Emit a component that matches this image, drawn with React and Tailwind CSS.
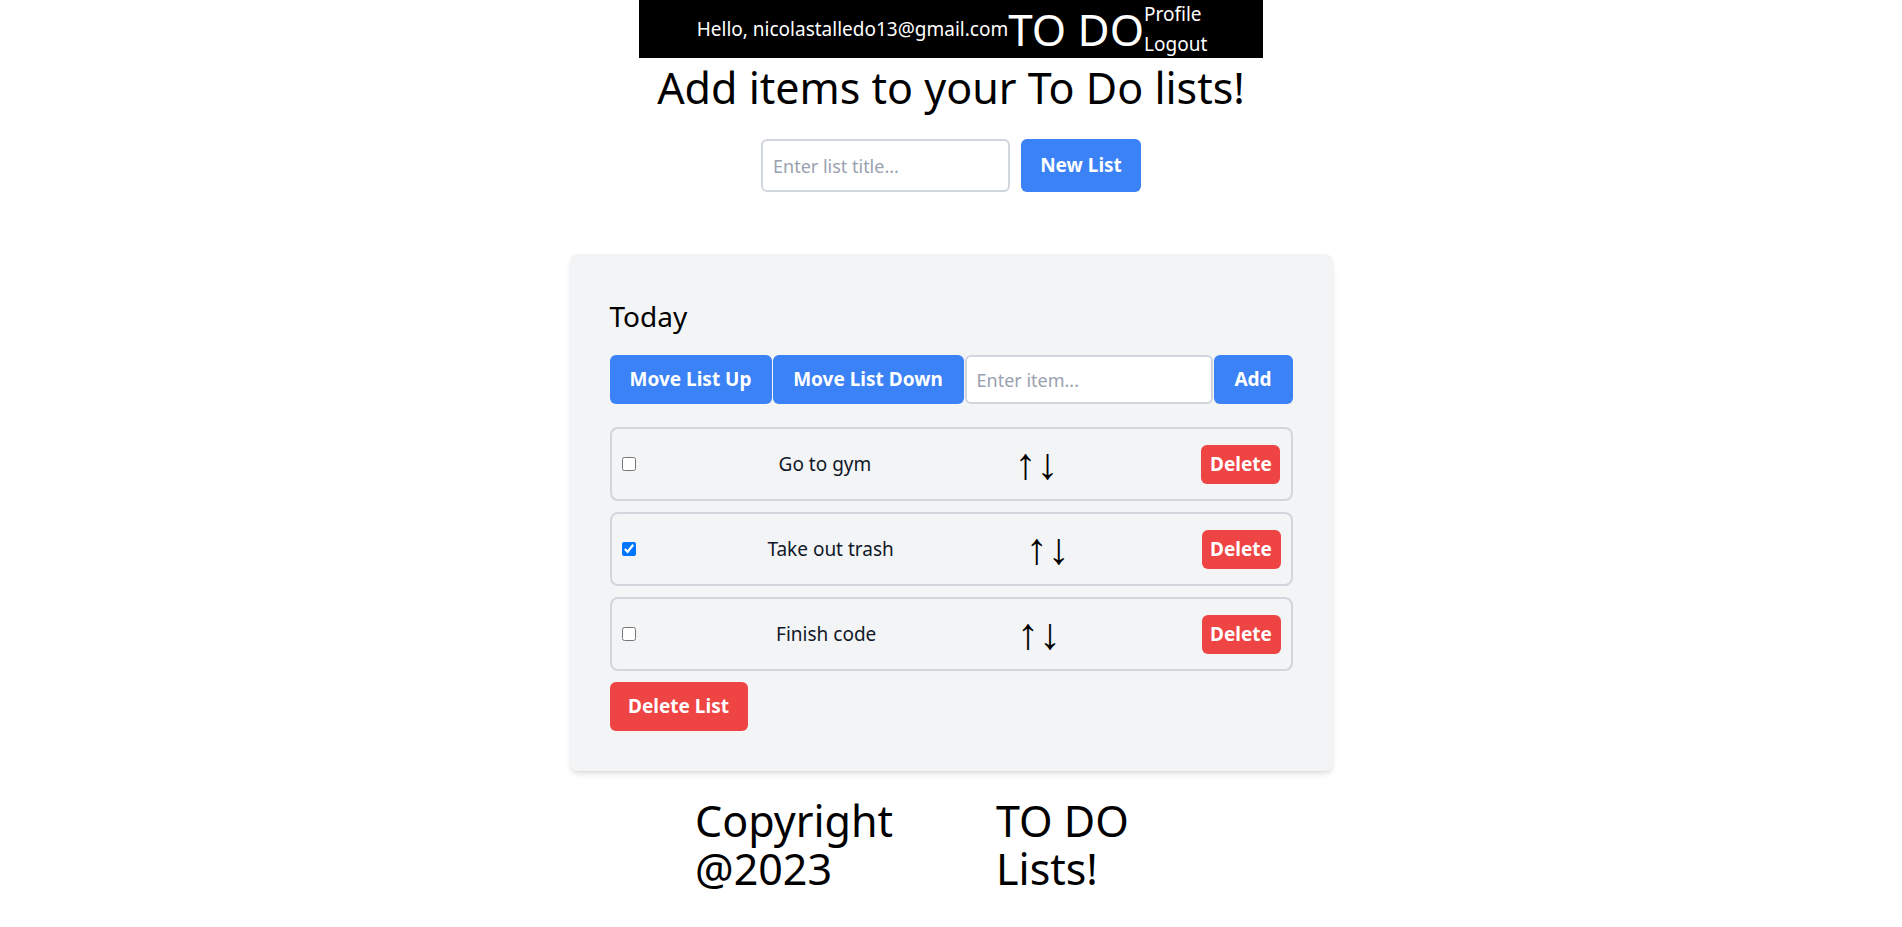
import { useState } from "react";

const font = { fontFamily: '"Segoe UI", "Noto Sans", sans-serif' };

function Item({ text, done }) {
  const [checked, setChecked] = useState(done);
  return (
    <div className="flex justify-between items-center h-[74px] px-2.5 border-2 border-gray-300 rounded-lg">
      <input
        type="checkbox"
        checked={checked}
        onChange={() => setChecked(!checked)}
        className="w-[14px] h-[14px]"
      />
      <span className="text-[19px] text-gray-900">{text}</span>
      <span className="text-[44px] leading-none" style={{ fontFamily: '"Liberation Sans", sans-serif' }}>
        ↑↓
      </span>
      <button className="h-[39px] w-[79px] bg-[#ef4444] text-white font-bold text-[19px] rounded-md">Delete</button>
    </div>
  );
}

export default function App() {
  return (
    <div className="min-h-screen bg-white text-black" style={font}>
      {/* Header */}
      <header className="mx-auto w-fit h-[58px] pl-[58px] pr-[56px] bg-black text-white flex items-center">
        <span className="text-[19px]">Hello, nicolastalledo13@gmail.com</span>
        <span className="text-[44px] leading-none">TO DO</span>
        <div className="flex flex-col text-[19px] leading-[30px]">
          <a href="#">Profile</a>
          <a href="#">Logout</a>
        </div>
      </header>

      <h1 className="text-center text-[43px] leading-[59px]">Add items to your To Do lists!</h1>

      <div className="flex justify-center gap-[11px] mt-[22px]">
        <input
          placeholder="Enter list title..."
          className="w-[249px] h-[53px] px-2.5 border-2 border-gray-300 rounded-md text-lg bg-white placeholder:text-gray-400 outline-none"
        />
        <button className="w-[120px] h-[53px] bg-[#3b82f6] text-white font-bold text-[19px] rounded-md">New List</button>
      </div>

      {/* List card */}
      <div className="w-[763px] mx-auto mt-[62px] bg-[#f3f4f6] rounded-lg shadow-md p-10">
        <h2 className="text-[28px] leading-9 mt-1">Today</h2>
        <div className="flex gap-px mt-[21px]">
          <button className="h-[49px] w-[162px] bg-[#3b82f6] text-white font-bold text-[19px] rounded-md">Move List Up</button>
          <button className="h-[49px] w-[191px] bg-[#3b82f6] text-white font-bold text-[19px] rounded-md">Move List Down</button>
          <input
            placeholder="Enter item..."
            className="flex-1 min-w-0 h-[49px] px-2.5 border-2 border-gray-300 rounded-md text-lg bg-white placeholder:text-gray-400 outline-none"
          />
          <button className="h-[49px] w-[79px] bg-[#3b82f6] text-white font-bold text-[19px] rounded-md">Add</button>
        </div>

        <div className="flex flex-col gap-[11px] mt-[23px]">
          <Item text="Go to gym" />
          <Item text="Take out trash" done />
          <Item text="Finish code" />
        </div>

        <button className="mt-[11px] h-[49px] w-[138px] bg-[#ef4444] text-white font-bold text-[19px] rounded-md">Delete List</button>
      </div>

      {/* Footer */}
      <footer className="flex justify-center mt-[26px] text-[43px] leading-[48px]">
        <div className="w-[301px]">Copyright @2023</div>
        <div className="w-[211px]">TO DO Lists!</div>
      </footer>
    </div>
  );
}
